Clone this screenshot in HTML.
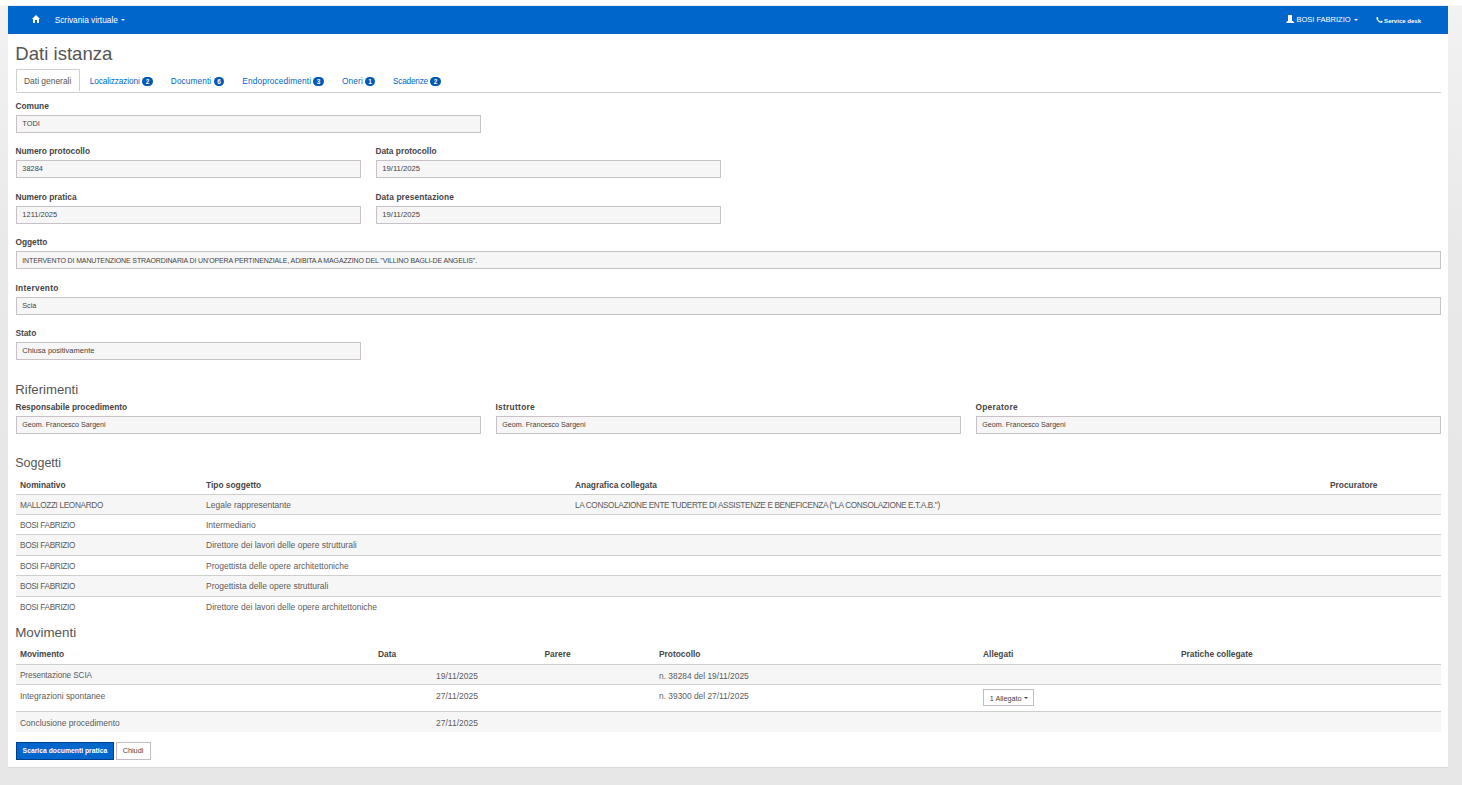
<!DOCTYPE html>
<html><head><meta charset="utf-8">
<style>
html,body{margin:0;padding:0}
body{width:1462px;height:785px;overflow:hidden;position:relative;background:linear-gradient(#fff 0px,#fff 5px,#f2f2f2 6px,#e9e9e9 250px,#e7e7e7 500px);font-family:"Liberation Sans",sans-serif}
.a{position:absolute;white-space:nowrap;line-height:1}
.badge{position:absolute;height:9px;border-radius:5px;background:#0059b8;color:#fff;font-size:6.5px;font-weight:bold;line-height:9px;text-align:center}
.inp{position:absolute;height:16px;border:1px solid #c8c2c8;background:#f6f6f6}
</style></head>
<body>
<div style="position:absolute;left:8px;top:6px;width:1440px;height:761px;background:#fff;box-shadow:0 1px 0 #dadada"></div>
<div style="position:absolute;left:8px;top:5px;width:1440px;height:1px;background:#ececec"></div>
<div style="position:absolute;left:8px;top:6px;width:1440px;height:28px;background:#0066cc"></div>
<svg style="position:absolute;left:32px;top:15px" width="9" height="8" viewBox="0 0 9 8"><path d="M4 0 L8 4 L7 4 L7 8 L5 8 L5 5 L3 5 L3 8 L1 8 L1 4 L0 4 Z" fill="#fff"/></svg>
<div class="a" style="left:54.7px;top:15.75px;font-size:8.3px;font-weight:400;color:#fff;">Scrivania virtuale</div>
<svg style="position:absolute;left:121px;top:19px" width="4" height="2" viewBox="0 0 4 2"><path d="M0 0 H4 L2 2 Z" fill="#fff"/></svg>
<svg style="position:absolute;left:1286px;top:15px" width="9" height="8" viewBox="0 0 9 8"><path d="M2 0.6 Q2 0 2.6 0 H5.4 Q6 0 6 0.6 V6 H2 Z M1.2 6 H6.8 L8.6 8 H0 Z" fill="#fff"/></svg>
<div class="a" style="left:1296.4px;top:16.43px;font-size:7.5px;font-weight:400;color:#fff;">BOSI FABRIZIO</div>
<svg style="position:absolute;left:1354px;top:19px" width="4" height="2" viewBox="0 0 4 2"><path d="M0 0 H4 L2 2 Z" fill="#fff"/></svg>
<svg style="position:absolute;left:1376px;top:17px" width="7" height="6" viewBox="0 0 7 6"><path d="M0.3 0.6 L1.6 0 L2.6 1.6 L1.8 2.3 Q2.8 3.8 4.3 4.4 L5 3.6 L6.8 4.5 L6.3 5.8 Q4 6.2 2 4.3 Q0.2 2.6 0.3 0.6 Z" fill="#fff"/></svg>
<div class="a" style="left:1384.1px;top:17.86px;font-size:6.05px;font-weight:700;color:#fff;">Service desk</div>
<div class="a" style="left:15.3px;top:44.79px;font-size:18.6px;font-weight:400;color:#555;">Dati istanza</div>
<div style="position:absolute;left:16px;top:92px;width:1425px;height:1px;background:#cdcfcd"></div>
<div style="position:absolute;left:16px;top:69px;width:64px;height:22px;background:#fff;border:1px solid #cdd2cd;border-bottom:none;box-sizing:border-box"></div>
<div class="a" style="left:24.0px;top:77.22px;font-size:8.45px;font-weight:400;color:#555;">Dati generali</div>
<div class="a" style="left:89.7px;top:77.34px;font-size:8.3px;font-weight:400;color:#0066cc;letter-spacing:-0.11px">Localizzazioni</div>
<div class="badge" style="left:142px;top:77px;width:11px">2</div>
<div class="a" style="left:170.8px;top:77.34px;font-size:8.3px;font-weight:400;color:#0066cc;letter-spacing:0.09px">Documenti</div>
<div class="badge" style="left:214px;top:77px;width:10px">6</div>
<div class="a" style="left:242.3px;top:77.34px;font-size:8.3px;font-weight:400;color:#0066cc;letter-spacing:0.13px">Endoprocedimenti</div>
<div class="badge" style="left:313px;top:77px;width:11px">3</div>
<div class="a" style="left:342.0px;top:77.34px;font-size:8.3px;font-weight:400;color:#0066cc;letter-spacing:0.14px">Oneri</div>
<div class="badge" style="left:365px;top:77px;width:10px">1</div>
<div class="a" style="left:393.0px;top:77.34px;font-size:8.3px;font-weight:400;color:#0066cc;letter-spacing:-0.24px">Scadenze</div>
<div class="badge" style="left:430px;top:77px;width:11px">2</div>
<div class="a" style="left:15.4px;top:102.20px;font-size:8.35px;font-weight:700;color:#464646;">Comune</div>
<div class="inp" style="left:16px;top:115px;width:463px"></div>
<div class="a" style="left:22.3px;top:120.31px;font-size:7.4px;font-weight:400;color:#444;">TODI</div>
<div class="a" style="left:15.4px;top:147.20px;font-size:8.35px;font-weight:700;color:#464646;">Numero protocollo</div>
<div class="inp" style="left:16px;top:160px;width:343px"></div>
<div class="a" style="left:22.3px;top:165.31px;font-size:7.4px;font-weight:400;color:#444;">38284</div>
<div class="a" style="left:375.4px;top:147.20px;font-size:8.35px;font-weight:700;color:#464646;">Data protocollo</div>
<div class="inp" style="left:376px;top:160px;width:343px"></div>
<div class="a" style="left:382.3px;top:165.10px;font-size:7.65px;font-weight:400;color:#444;">19/11/2025</div>
<div class="a" style="left:15.4px;top:193.20px;font-size:8.35px;font-weight:700;color:#464646;">Numero pratica</div>
<div class="inp" style="left:16px;top:206px;width:343px"></div>
<div class="a" style="left:22.3px;top:211.23px;font-size:7.5px;font-weight:400;color:#444;">1211/2025</div>
<div class="a" style="left:375.4px;top:193.20px;font-size:8.35px;font-weight:700;color:#464646;letter-spacing:0.12px">Data presentazione</div>
<div class="inp" style="left:376px;top:206px;width:343px"></div>
<div class="a" style="left:382.3px;top:211.10px;font-size:7.65px;font-weight:400;color:#444;">19/11/2025</div>
<div class="a" style="left:15.4px;top:238.20px;font-size:8.35px;font-weight:700;color:#464646;">Oggetto</div>
<div class="inp" style="left:16px;top:251px;width:1423px"></div>
<div class="a" style="left:22.3px;top:256.65px;font-size:7.0px;font-weight:400;color:#444;letter-spacing:-0.135px">INTERVENTO DI MANUTENZIONE STRAORDINARIA DI UN'OPERA PERTINENZIALE, ADIBITA A MAGAZZINO DEL "VILLINO BAGLI-DE ANGELIS".</div>
<div class="a" style="left:15.4px;top:284.20px;font-size:8.35px;font-weight:700;color:#464646;letter-spacing:0.3px">Intervento</div>
<div class="inp" style="left:16px;top:297px;width:1423px"></div>
<div class="a" style="left:22.3px;top:302.48px;font-size:7.2px;font-weight:400;color:#444;">Scia</div>
<div class="a" style="left:15.4px;top:329.20px;font-size:8.35px;font-weight:700;color:#464646;">Stato</div>
<div class="inp" style="left:16px;top:342px;width:343px"></div>
<div class="a" style="left:22.3px;top:347.18px;font-size:7.55px;font-weight:400;color:#444;">Chiusa positivamente</div>
<div class="a" style="left:15.2px;top:382.68px;font-size:13.2px;font-weight:400;color:#555;">Riferimenti</div>
<div class="a" style="left:15.4px;top:403.20px;font-size:8.35px;font-weight:700;color:#464646;">Responsabile procedimento</div>
<div class="inp" style="left:16px;top:416px;width:463px"></div>
<div class="a" style="left:22.3px;top:421.52px;font-size:7.15px;font-weight:400;color:#444;">Geom. Francesco Sargeni</div>
<div class="a" style="left:495.4px;top:403.20px;font-size:8.35px;font-weight:700;color:#464646;letter-spacing:0.3px">Istruttore</div>
<div class="inp" style="left:496px;top:416px;width:463px"></div>
<div class="a" style="left:502.3px;top:421.52px;font-size:7.15px;font-weight:400;color:#444;">Geom. Francesco Sargeni</div>
<div class="a" style="left:975.4px;top:403.20px;font-size:8.35px;font-weight:700;color:#464646;letter-spacing:0.3px">Operatore</div>
<div class="inp" style="left:976px;top:416px;width:463px"></div>
<div class="a" style="left:982.3px;top:421.52px;font-size:7.15px;font-weight:400;color:#444;">Geom. Francesco Sargeni</div>
<div class="a" style="left:15.2px;top:456.68px;font-size:12.5px;font-weight:400;color:#555;">Soggetti</div>
<div class="a" style="left:20.0px;top:480.66px;font-size:8.4px;font-weight:700;color:#464646;">Nominativo</div>
<div class="a" style="left:206.0px;top:480.66px;font-size:8.4px;font-weight:700;color:#464646;">Tipo soggetto</div>
<div class="a" style="left:575.0px;top:480.66px;font-size:8.4px;font-weight:700;color:#464646;">Anagrafica collegata</div>
<div class="a" style="left:1330.0px;top:480.66px;font-size:8.4px;font-weight:700;color:#464646;">Procuratore</div>
<div style="position:absolute;left:16px;top:494px;width:1425px;height:1px;background:#cdcfcd"></div>
<div style="position:absolute;left:16px;top:495px;width:1425px;height:19px;background:#f6f6f6"></div>
<div style="position:absolute;left:16px;top:514px;width:1425px;height:1px;background:#cdcfcd"></div>
<div class="a" style="left:20.0px;top:501.99px;font-size:8.25px;font-weight:400;color:#5c5c5c;letter-spacing:-0.35px">MALLOZZI LEONARDO</div>
<div class="a" style="left:206.0px;top:501.07px;font-size:8.5px;font-weight:400;color:#5c5c5c;">Legale rappresentante</div>
<div class="a" style="left:575.0px;top:501.99px;font-size:8.25px;font-weight:400;color:#5c5c5c;letter-spacing:-0.38px">LA CONSOLAZIONE ENTE TUDERTE DI ASSISTENZE E BENEFICENZA ("LA CONSOLAZIONE E.T.A.B.")</div>
<div style="position:absolute;left:16px;top:534px;width:1425px;height:1px;background:#cdcfcd"></div>
<div class="a" style="left:20.0px;top:521.99px;font-size:8.25px;font-weight:400;color:#5c5c5c;letter-spacing:-0.35px">BOSI FABRIZIO</div>
<div class="a" style="left:206.0px;top:521.07px;font-size:8.5px;font-weight:400;color:#5c5c5c;">Intermediario</div>
<div style="position:absolute;left:16px;top:535px;width:1425px;height:20px;background:#f6f6f6"></div>
<div style="position:absolute;left:16px;top:555px;width:1425px;height:1px;background:#cdcfcd"></div>
<div class="a" style="left:20.0px;top:541.99px;font-size:8.25px;font-weight:400;color:#5c5c5c;letter-spacing:-0.35px">BOSI FABRIZIO</div>
<div class="a" style="left:206.0px;top:541.07px;font-size:8.5px;font-weight:400;color:#5c5c5c;">Direttore dei lavori delle opere strutturali</div>
<div style="position:absolute;left:16px;top:575px;width:1425px;height:1px;background:#cdcfcd"></div>
<div class="a" style="left:20.0px;top:562.99px;font-size:8.25px;font-weight:400;color:#5c5c5c;letter-spacing:-0.35px">BOSI FABRIZIO</div>
<div class="a" style="left:206.0px;top:562.07px;font-size:8.5px;font-weight:400;color:#5c5c5c;">Progettista delle opere architettoniche</div>
<div style="position:absolute;left:16px;top:576px;width:1425px;height:20px;background:#f6f6f6"></div>
<div style="position:absolute;left:16px;top:596px;width:1425px;height:1px;background:#cdcfcd"></div>
<div class="a" style="left:20.0px;top:582.99px;font-size:8.25px;font-weight:400;color:#5c5c5c;letter-spacing:-0.35px">BOSI FABRIZIO</div>
<div class="a" style="left:206.0px;top:582.07px;font-size:8.5px;font-weight:400;color:#5c5c5c;">Progettista delle opere strutturali</div>
<div class="a" style="left:20.0px;top:603.99px;font-size:8.25px;font-weight:400;color:#5c5c5c;letter-spacing:-0.35px">BOSI FABRIZIO</div>
<div class="a" style="left:206.0px;top:603.07px;font-size:8.5px;font-weight:400;color:#5c5c5c;">Direttore dei lavori delle opere architettoniche</div>
<div class="a" style="left:15.2px;top:626.31px;font-size:13.4px;font-weight:400;color:#555;">Movimenti</div>
<div class="a" style="left:20.0px;top:650.36px;font-size:8.4px;font-weight:700;color:#464646;">Movimento</div>
<div class="a" style="left:378.0px;top:650.36px;font-size:8.4px;font-weight:700;color:#464646;">Data</div>
<div class="a" style="left:544.5px;top:650.36px;font-size:8.4px;font-weight:700;color:#464646;">Parere</div>
<div class="a" style="left:659.0px;top:650.36px;font-size:8.4px;font-weight:700;color:#464646;">Protocollo</div>
<div class="a" style="left:983.0px;top:650.36px;font-size:8.4px;font-weight:700;color:#464646;">Allegati</div>
<div class="a" style="left:1181.0px;top:650.36px;font-size:8.4px;font-weight:700;color:#464646;">Pratiche collegate</div>
<div style="position:absolute;left:16px;top:664px;width:1425px;height:1px;background:#cdcfcd"></div>
<div style="position:absolute;left:16px;top:665px;width:1425px;height:19px;background:#f6f6f6"></div>
<div style="position:absolute;left:16px;top:684px;width:1425px;height:1px;background:#cdcfcd"></div>
<div style="position:absolute;left:16px;top:711px;width:1425px;height:1px;background:#cdcfcd"></div>
<div style="position:absolute;left:16px;top:712px;width:1425px;height:20px;background:#f6f6f6"></div>
<div class="a" style="left:20.0px;top:671.83px;font-size:8.2px;font-weight:400;color:#5c5c5c;letter-spacing:-0.1px">Presentazione SCIA</div>
<div class="a" style="left:436.0px;top:671.57px;font-size:8.5px;font-weight:400;color:#5c5c5c;">19/11/2025</div>
<div class="a" style="left:659.0px;top:671.66px;font-size:8.4px;font-weight:400;color:#5c5c5c;">n. 38284 del 19/11/2025</div>
<div class="a" style="left:20.0px;top:691.63px;font-size:8.44px;font-weight:400;color:#5c5c5c;">Integrazioni spontanee</div>
<div class="a" style="left:436.0px;top:691.57px;font-size:8.5px;font-weight:400;color:#5c5c5c;">27/11/2025</div>
<div class="a" style="left:659.0px;top:691.66px;font-size:8.4px;font-weight:400;color:#5c5c5c;">n. 39300 del 27/11/2025</div>
<div style="position:absolute;left:983px;top:689px;width:51px;height:17px;border:1px solid #c4bcc4;box-sizing:border-box;background:#fff"></div>
<div class="a" style="left:989.8px;top:695.15px;font-size:7.24px;font-weight:400;color:#444;">1 Allegato</div>
<svg style="position:absolute;left:1024px;top:697px" width="4" height="2" viewBox="0 0 4 2"><path d="M0 0 H4 L2 2 Z" fill="#444"/></svg>
<div class="a" style="left:20.0px;top:718.63px;font-size:8.44px;font-weight:400;color:#5c5c5c;">Conclusione procedimento</div>
<div class="a" style="left:436.0px;top:718.57px;font-size:8.5px;font-weight:400;color:#5c5c5c;">27/11/2025</div>
<div style="position:absolute;left:16px;top:742px;width:98px;height:18px;background:#0066cc;border:1px solid #003f8a;box-sizing:border-box"></div>
<div class="a" style="left:22.6px;top:747.82px;font-size:6.8px;font-weight:700;color:#fff;">Scarica documenti pratica</div>
<div style="position:absolute;left:116px;top:742px;width:35px;height:18px;background:#fff;border:1px solid #c4bcc4;box-sizing:border-box"></div>
<div class="a" style="left:122.7px;top:747.42px;font-size:7.27px;font-weight:400;color:#444;">Chiudi</div>
</body></html>
